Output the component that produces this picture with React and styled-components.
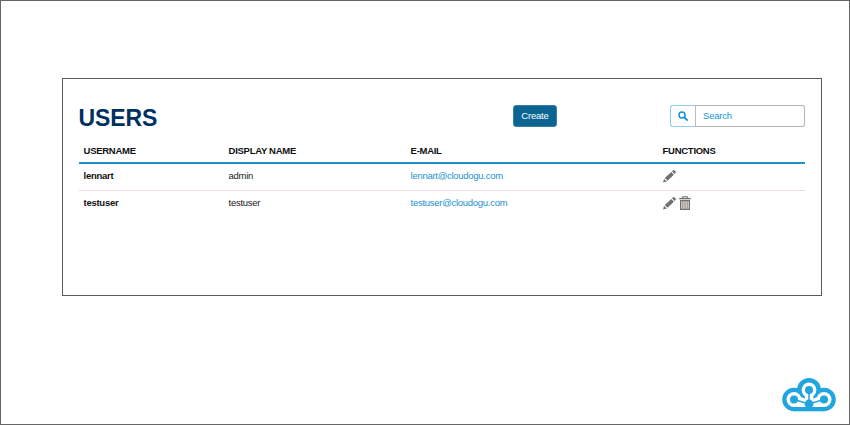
import React from "react";
import styled, { createGlobalStyle } from "styled-components";

const GlobalStyle = createGlobalStyle`
  * { box-sizing: border-box; }
  body { margin: 0; background: #fff; }
`;

const Page = styled.div`
  width: 850px;
  height: 425px;
  padding: 77px 27px 0 61px;
  border: 1px solid #666;
  background: #fff;
  font-family: "Liberation Sans", Arial, sans-serif;
  font-size: 9.5px;
  letter-spacing: -0.28px;
  color: #1c1c1c;
  display: flex;
  flex-direction: column;
`;

const Panel = styled.main`
  height: 218px;
  border: 1px solid #5c5c5c;
  padding: 26px 16px 0;
`;

const Toolbar = styled.header`
  display: grid;
  grid-template-columns: 434px 157px 135px;
  height: 34px;
  align-items: start;
`;

const Title = styled.h1`
  margin: 0 0 0 -0.4px;
  font-size: 23px;
  letter-spacing: -0.15px;
  line-height: 26px;
  color: #00305f;
`;

const CreateButton = styled.button`
  width: 44px;
  height: 22px;
  padding: 0;
  border: 1px solid #3c7f9f;
  border-radius: 3px;
  background: #0a6592;
  color: #fff;
  font: 9.5px/20px "Liberation Sans", Arial, sans-serif;
  letter-spacing: -0.2px;
`;

const SearchBox = styled.div`
  display: flex;
  height: 22px;
`;

const SearchButton = styled.button`
  width: 26px;
  padding: 0;
  display: flex;
  align-items: center;
  justify-content: center;
  border: 1px solid #8fcdec;
  border-right-color: #b0bcc2;
  border-radius: 3px 0 0 3px;
  background: #fff;
`;

const SearchInput = styled.input`
  flex: 1;
  min-width: 0;
  padding: 0 7px 2px;
  border: 1px solid #b2b2b2;
  border-left: 0;
  border-radius: 0 3px 3px 0;
  outline: 0;
  font: 9.5px "Liberation Sans", Arial, sans-serif;
  letter-spacing: -0.2px;
  &::placeholder { color: #1496d6; opacity: 1; }
`;

const Row = styled.div`
  display: grid;
  grid-template-columns: 145px 182px 252px 1fr;
  height: 27px;
  padding: 0 0 3px 4.6px;
  align-items: center;
  border-bottom: ${(p) => (p.$last ? "0" : "1px solid #eedcdc")};
`;

const HeadRow = styled(Row)`
  height: 25px;
  padding-bottom: 0;
  font-weight: bold;
  color: #111;
  border-bottom: 2px solid #1c91cd;
`;

const Cell = styled.span`
  line-height: 10px;
`;

const Name = styled(Cell)`
  font-weight: bold;
  color: #111;
`;

const Mail = styled.a`
  line-height: 10px;
  color: #1b92d0;
`;

const Actions = styled.div`
  display: flex;
  align-items: center;
  gap: 3px;
  height: 14px;
`;

const Icon = styled.svg`
  display: block;
  flex: none;
`;

const Footer = styled.footer`
  display: flex;
  justify-content: flex-end;
  margin: 82px -13.5px 0 0;
`;

const SearchIcon = () => (
  <Icon width="10" height="10" viewBox="0 0 10 10" fill="none" stroke="#1590d0">
    <circle cx="4" cy="4" r="3" strokeWidth="1.5" />
    <path d="M6.3 6.3 9 9" strokeWidth="1.8" strokeLinecap="round" />
  </Icon>
);

const Pencil = () => (
  <Icon width="13" height="14" viewBox="0 0 13 14" fill="#707070">
    <path d="M0 13.6 1.1 9.9 3.9 12.5Z" />
    <path d="M1.8 9.1 8.3 3 10.9 5.7 4.5 11.8Z" />
    <path d="M9 2.3 10.2 1.2Q10.8.7 11.4 1.3L12.6 2.6Q13.1 3.2 12.6 3.7L11.5 4.9Z" />
  </Icon>
);

const Trash = () => (
  <Icon width="12" height="14" viewBox="0 0 12 14" fill="none" stroke="#77716d">
    <path d="M.3 2.6H11.7" strokeWidth="1.4" />
    <path d="M3.7 2.2V.7H8.3V2.2" strokeWidth="1.1" />
    <path d="M1.6 4.6H10.4V13.3H1.6Z" fill="#ddd8d2" strokeWidth="1.2" />
    <path d="M3.8 5V12.8M6 5V12.8M8.2 5V12.8" strokeWidth=".9" stroke="#8b847e" />
  </Icon>
);

const CloudLogo = () => (
  <Icon width="54" height="34" viewBox="0 0 54 34">
    <g fill="#20a5df">
      <circle cx="12" cy="21.5" r="11.8" />
      <circle cx="42" cy="21.5" r="11.8" />
      <circle cx="27" cy="12" r="12" />
      <path d="M12 18H42V33.3H12Z" />
    </g>
    <g fill="#fff">
      <circle cx="12" cy="21.5" r="7.5" />
      <circle cx="42" cy="21.5" r="7.5" />
      <circle cx="27" cy="12" r="7.4" />
      <path d="M22.8 16H31.2V20.5L35.5 19 42 24V29H12V24L18.5 19 22.8 20.5Z" />
    </g>
    <path d="M27 12V26M12 21.5 27 26 42 21.5" fill="none" stroke="#20a5df" strokeWidth="1.5" />
    <g fill="#20a5df">
      <circle cx="27" cy="12" r="4" />
      <circle cx="12" cy="21.5" r="4" />
      <circle cx="42" cy="21.5" r="4" />
      <circle cx="27" cy="26" r="4.4" />
    </g>
  </Icon>
);

const users = [
  { name: "lennart", display: "admin", mail: "lennart@cloudogu.com", removable: false },
  { name: "testuser", display: "testuser", mail: "testuser@cloudogu.com", removable: true },
];

export default function App() {
  return (
    <Page>
      <GlobalStyle />
      <Panel>
        <Toolbar>
          <Title>USERS</Title>
          <CreateButton>Create</CreateButton>
          <SearchBox>
            <SearchButton aria-label="Search"><SearchIcon /></SearchButton>
            <SearchInput placeholder="Search" />
          </SearchBox>
        </Toolbar>
        <HeadRow>
          <Cell>USERNAME</Cell>
          <Cell>DISPLAY NAME</Cell>
          <Cell>E-MAIL</Cell>
          <Cell>FUNCTIONS</Cell>
        </HeadRow>
        {users.map((u, i) => (
          <Row key={u.name} $last={i === users.length - 1}>
            <Name>{u.name}</Name>
            <Cell>{u.display}</Cell>
            <Mail>{u.mail}</Mail>
            <Actions>
              <Pencil />
              {u.removable && <Trash />}
            </Actions>
          </Row>
        ))}
      </Panel>
      <Footer><CloudLogo /></Footer>
    </Page>
  );
}
